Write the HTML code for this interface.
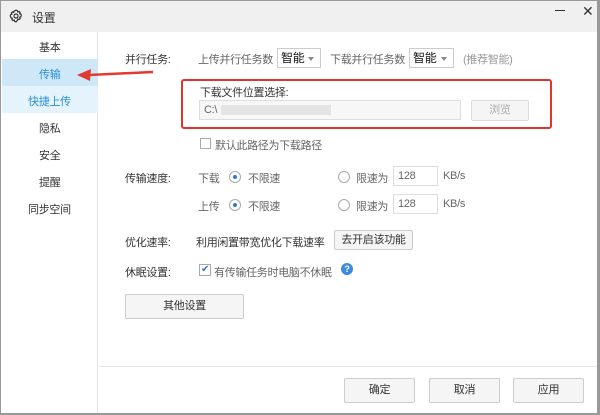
<!DOCTYPE html><html><head><meta charset="utf-8"><style>
*{margin:0;padding:0;box-sizing:border-box}
body{width:600px;height:415px;background:#fff;font-family:"Liberation Sans","Noto Sans CJK SC",sans-serif;font-size:11px;letter-spacing:-0.3px;color:#333;position:relative;overflow:hidden}
.a{position:absolute;white-space:nowrap}
.btn{position:absolute;border:1px solid #ccc;background:#f5f5f5;text-align:center;border-radius:2px}
.sel{position:absolute;border:1px solid #ccc;background:#fff;height:20px;font-size:12px;padding-left:3px;line-height:18px;color:#111}
.sel:after{content:"";position:absolute;right:6px;top:8px;border:3px solid transparent;border-top:4px solid #888}
.rad{position:absolute;width:12px;height:12px;border:1px solid #aaa;border-radius:50%;background:#fff}
.rad.on:after{content:"";position:absolute;left:3px;top:3px;width:4px;height:4px;border-radius:50%;background:#2a7ad6}
.inp{position:absolute;border:1px solid #ddd;background:#fff;height:20px;padding-left:4px;line-height:18px;font-size:11px;color:#666}
.g{color:#666}
</style></head><body>
<div class="a" style="left:0;top:0;width:600px;height:32px;background:#f0f0f0"></div>
<svg class="a" style="left:9px;top:9px" width="14" height="14" viewBox="0 0 14 14"><path d="M7 1.2l1.4.4.4 1.3 1.3-.5 1 1-.5 1.3 1.3.4.4 1.4-.4 1.4-1.3.4.5 1.3-1 1-1.3-.5-.4 1.3L7 12.8l-1.4-.4-.4-1.3-1.3.5-1-1 .5-1.3-1.3-.4L1.2 7l.4-1.4 1.3-.4-.5-1.3 1-1 1.3.5.4-1.3z" fill="none" stroke="#333" stroke-width="1.2"/><circle cx="7" cy="7" r="2" fill="none" stroke="#333" stroke-width="1.2"/></svg>
<div class="a" style="left:32px;top:9px;font-size:12px">设置</div>
<div class="a" style="left:555px;top:10px;width:10px;height:1px;background:#333"></div>
<div class="a" style="left:582px;top:3px;font-size:14px;color:#333">✕</div>
<div class="a" style="left:0;top:32px;width:98px;height:381px;background:#fff;border-right:1px solid #e4e4e4"></div>
<div class="a" style="left:39px;top:39px">基本</div>
<div class="a" style="left:2px;top:59px;width:96px;height:27px;background:#cfe8f8"></div>
<div class="a" style="left:2px;top:86px;width:96px;height:27px;background:#e5f3fc"></div>
<div class="a" style="left:39px;top:66px;color:#2b8fd6">传输</div>
<div class="a" style="left:28px;top:93px;color:#2b8fd6">快捷上传</div>
<div class="a" style="left:39px;top:120px">隐私</div>
<div class="a" style="left:39px;top:147px">安全</div>
<div class="a" style="left:39px;top:174px">提醒</div>
<div class="a" style="left:28px;top:201px">同步空间</div>
<svg class="a" style="left:75px;top:66px" width="80" height="16"><path d="M78 6 L14 9" stroke="#e03a33" stroke-width="2.5"/><path d="M2 9 L16 3 L15 15 Z" fill="#e03a33"/></svg>
<div class="a" style="left:125px;top:51px">并行任务:</div>
<div class="a g" style="left:198px;top:51px">上传并行任务数</div>
<div class="sel" style="left:277px;top:48px;width:44px">智能</div>
<div class="a g" style="left:330px;top:51px">下载并行任务数</div>
<div class="sel" style="left:409px;top:48px;width:45px">智能</div>
<div class="a" style="left:463px;top:51px;color:#999">(推荐智能)</div>
<div class="a" style="left:181px;top:79px;width:371px;height:50px;border:2px solid #e0342d;border-radius:3px"></div>
<div class="a" style="left:200px;top:84px">下载文件位置选择:</div>
<div class="inp" style="left:199px;top:100px;width:262px;background:#f7f7f7">C:\<span style="display:inline-block;width:110px;height:10px;background:#e4e4e4;margin-left:4px;vertical-align:middle"></span></div>
<div class="btn" style="left:471px;top:100px;width:58px;height:21px;line-height:19px;color:#aaa;border-color:#ddd">浏览</div>
<div class="a" style="left:200px;top:138px;width:11px;height:11px;border:1px solid #aaa"></div>
<div class="a g" style="left:215px;top:137px">默认此路径为下载路径</div>
<div class="a" style="left:125px;top:170px">传输速度:</div>
<div class="a g" style="left:198px;top:170px">下载</div>
<div class="rad on" style="left:229px;top:171px"></div>
<div class="a g" style="left:248px;top:170px">不限速</div>
<div class="rad" style="left:338px;top:171px"></div>
<div class="a g" style="left:356px;top:170px">限速为</div>
<div class="inp" style="left:393px;top:166px;width:45px">128</div>
<div class="a g" style="left:443px;top:170px">KB/s</div>
<div class="a g" style="left:198px;top:198px">上传</div>
<div class="rad on" style="left:229px;top:199px"></div>
<div class="a g" style="left:248px;top:198px">不限速</div>
<div class="rad" style="left:338px;top:199px"></div>
<div class="a g" style="left:356px;top:198px">限速为</div>
<div class="inp" style="left:393px;top:194px;width:45px">128</div>
<div class="a g" style="left:443px;top:198px">KB/s</div>
<div class="a" style="left:125px;top:234px">优化速率:</div>
<div class="a" style="left:196px;top:234px">利用闲置带宽优化下载速率</div>
<div class="btn" style="left:334px;top:230px;width:79px;height:20px;line-height:18px">去开启该功能</div>
<div class="a" style="left:125px;top:264px">休眠设置:</div>
<div class="a" style="left:199px;top:264px;width:12px;height:12px;border:1px solid #aaa;color:#2a7ad6;font-size:10px;line-height:10px;text-align:center">✔</div>
<div class="a g" style="left:214px;top:264px">有传输任务时电脑不休眠</div>
<div class="a" style="left:341px;top:263px;width:12px;height:12px;border-radius:50%;background:#3d8be0;color:#fff;font-size:9px;line-height:12px;text-align:center;font-weight:bold">?</div>
<div class="btn" style="left:125px;top:294px;width:119px;height:25px;line-height:23px">其他设置</div>
<div class="a" style="left:99px;top:366px;width:498px;height:1px;background:#e6e6e6"></div>
<div class="btn" style="left:344px;top:378px;width:71px;height:25px;line-height:23px">确定</div>
<div class="btn" style="left:429px;top:378px;width:71px;height:25px;line-height:23px">取消</div>
<div class="btn" style="left:513px;top:378px;width:71px;height:25px;line-height:23px">应用</div>
<div class="a" style="left:0;top:0;width:600px;height:415px;border:1px solid #999;border-right:3px solid #999;border-bottom:2px solid #999"></div>
</body></html>
